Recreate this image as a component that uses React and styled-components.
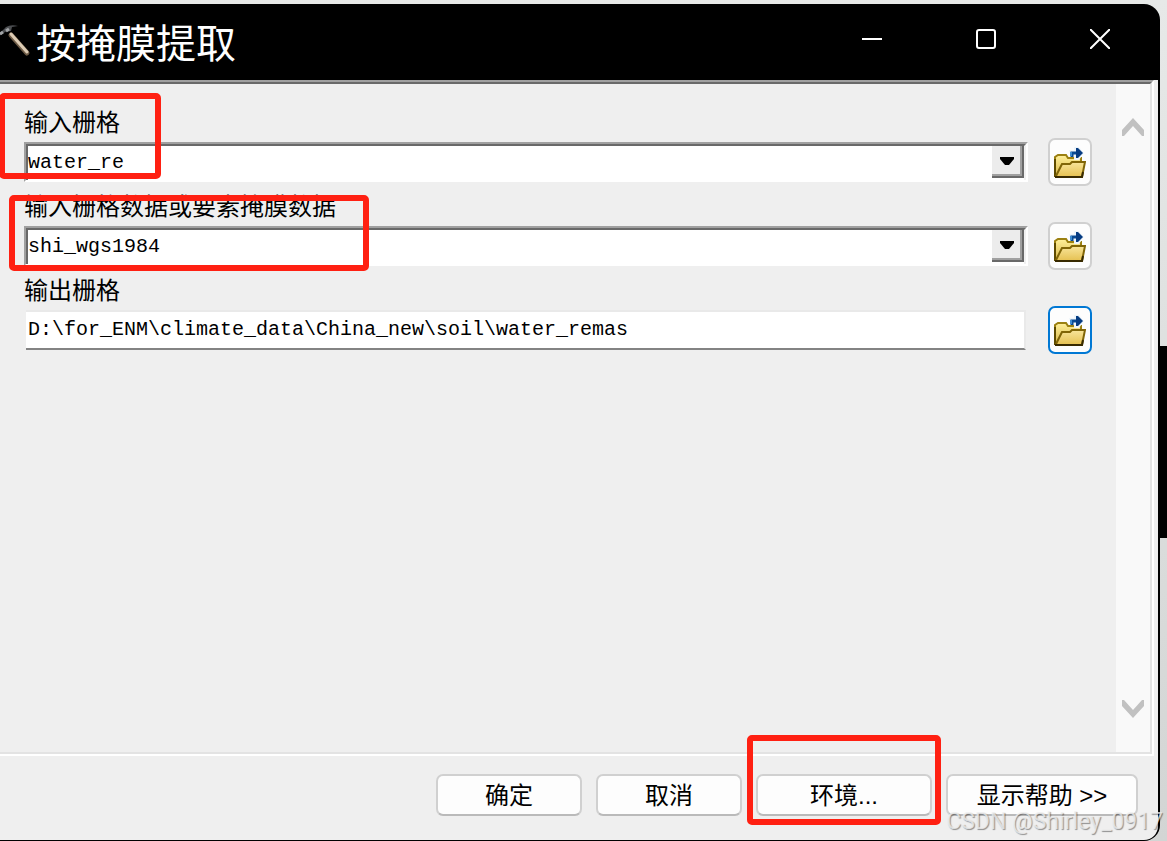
import React, { useState } from 'react';
import styled, { createGlobalStyle } from 'styled-components';

const GlobalStyle = createGlobalStyle`
  * {
    box-sizing: border-box;
  }
  body {
    margin: 0;
    overflow: hidden;
    color: #000;
    font-family: "Liberation Sans", "Noto Sans CJK SC", sans-serif;
  }
  button, input, select {
    font: inherit;
    color: inherit;
  }
`

const Desktop = styled.div`
  position: relative;
  display: flex;
  min-height: 100vh;
  padding: 4px 7px 0 0;
  background: linear-gradient(#e7e9e8, #d3d5d4);
`

// part of another window that shows behind the dialog
const BackWindow = styled.div`
  position: absolute;
  right: 0;
  top: 346px;
  width: 24px;
  height: 192px;
  background: #000;
`

const Dialog = styled.main`
  position: relative;
  flex: 1;
  display: flex;
  flex-direction: column;
  background: #000;
  border-radius: 0 16px 16px 0;
`

const TitleBar = styled.header`
  display: flex;
  align-items: center;
  height: 76px;
  padding-right: 3px;
  color: #fff;
`

const Title = styled.h1`
  flex: 1;
  margin: 0 0 0 4px;
  padding-top: 4px;
  font-size: 40px;
  font-weight: 400;
  line-height: 60px;
`

const WindowButton = styled.button`
  align-self: flex-start;
  display: flex;
  align-items: center;
  justify-content: center;
  width: 114px;
  height: 70px;
  padding: 0;
  border: 0;
  background: none;
  color: #fff;
`

const Client = styled.div`
  flex: 1;
  display: flex;
  flex-direction: column;
  margin: 0 2px 1px 0;
  background: #efefef;
  border-radius: 0 0 14px 0;
`

const Panel = styled.div`
  flex: 1;
  display: flex;
  margin-right: 4px;
  border: solid #fff;
  border-width: 2px 2px 2px 0;
  border-top-color: #a0a0a0;
`

const PanelInner = styled.div`
  flex: 1;
  display: flex;
  border: solid #e3e3e3;
  border-width: 2px 2px 2px 0;
  border-top-color: #696969;
`

const Form = styled.div`
  flex: 1;
  padding: 18px 24px;
`

const Field = styled.div`
  position: relative;
  display: grid;
  grid-template-columns: 1fr 44px;
  grid-template-rows: 36px 48px;
  column-gap: 20px;
  align-items: center;
`

const Label = styled.label`
  grid-column: 1 / -1;
  padding-top: 6px;
  font-size: 24px;
  line-height: 32px;
`

const Combo = styled.div`
  display: flex;
  height: 40px;
  border: 2px solid #fff;
  border-top-color: #a0a0a0;
  border-left-color: #a0a0a0;
`

const ComboInner = styled.div`
  flex: 1;
  display: grid;
  grid-template-columns: 1fr 32px;
  border: solid #696969;
  border-width: 2px 0 0 2px;
  border-right: 2px solid #f0f0f0;
  background: #fff;
`

const Select = styled.select`
  grid-area: 1 / 1 / 2 / 3;
  appearance: none;
  min-width: 0;
  padding: 0;
  border: 0;
  border-radius: 0;
  outline: none;
  background: #fff;
  font-family: "Liberation Mono", monospace;
  font-size: 20px;
  line-height: 28px;
`

const ComboArrow = styled.span`
  grid-area: 1 / 2 / 2 / 3;
  display: flex;
  align-items: center;
  justify-content: center;
  height: 32px;
  border: solid #696969;
  border-width: 0 2px 2px 0;
  background: #ececec;
  box-shadow: inset -2px -2px #a0a0a0;
  pointer-events: none;
`

const TextInput = styled.input`
  min-width: 0;
  height: 40px;
  margin: 0 2px;
  padding: 0 0 2px 2px;
  border: 2px solid #e9e9e9;
  border-left-width: 0;
  border-bottom-color: #838383;
  outline: none;
  background: #fff;
  font-family: "Liberation Mono", monospace;
  font-size: 20px;
`

const BrowseButton = styled.button`
  display: flex;
  align-items: center;
  justify-content: center;
  height: 48px;
  padding: 0;
  border: 2px solid ${props => (props.$active ? '#0078d4' : '#d0d0d0')};
  border-radius: 7px;
  background: #fdfdfd;
`

const ScrollBar = styled.div`
  display: flex;
  flex-direction: column;
  justify-content: space-between;
  width: 34px;
  padding: 32px 0;
  background: #f9f9f9;
`

const ScrollButton = styled.button`
  display: flex;
  justify-content: center;
  padding: 0;
  border: 0;
  background: none;
`

const Footer = styled.footer`
  display: flex;
  justify-content: flex-end;
  gap: 14px;
  padding: 18px 20px 24px;
`

const ButtonSlot = styled.div`
  position: relative;
  display: flex;
`

const Button = styled.button`
  width: ${props => props.$width || 146}px;
  height: 42px;
  padding: 2px 0 0;
  border: 2px solid #d0d0d0;
  border-bottom-color: #bababa;
  border-radius: 7px;
  background: #fdfdfd;
  font-size: 24px;
  line-height: 36px;
  white-space: pre;
`

// red frames drawn over the parts to fill in
const Mark = styled.div`
  position: absolute;
  z-index: 1;
  border: 6px solid #ff2012;
  border-radius: 5px;
  pointer-events: none;
`

const RasterMark = styled(Mark)`
  top: -9px;
  left: -25px;
  width: 162px;
  height: 86px;
`

const MaskMark = styled(Mark)`
  top: 9px;
  left: -15px;
  width: 360px;
  height: 76px;
`

const ButtonMark = styled(Mark)`
  inset: -39px -9px -9px;
`

const Watermark = styled.div`
  position: absolute;
  right: 4px;
  bottom: 5px;
  z-index: 2;
  color: rgba(240, 240, 240, 0.8);
  font-family: Roboto, sans-serif;
  font-size: 23px;
  line-height: 28px;
  text-shadow: 1px 1px 1px rgba(0, 0, 0, 0.4);
  pointer-events: none;
`

function HammerIcon() {
  return (
    <svg width="32" height="36" viewBox="0 0 32 36" aria-hidden="true">
      <path d="M11 11 27 29" stroke="#6d5a45" strokeWidth="5" strokeLinecap="round" />
      <path d="M11 10 27 28" stroke="#dccbb4" strokeWidth="3" strokeLinecap="round" />
      <path d="M0 9 6 3Q11 0 18 2L12 3 11 7 5 8 1 11H0Z" fill="#4c4e51" />
      <path d="M0 10 3 8M6 7 9 5" stroke="#a0a3a6" strokeWidth="3" />
    </svg>
  )
}

function FolderIcon() {
  return (
    <svg width="32" height="32" viewBox="0 0 32 32" aria-hidden="true">
      <defs>
        <linearGradient id="folderBack" x2="0" y2="1">
          <stop stopColor="#fff09a" />
          <stop offset="1" stopColor="#d9b84a" />
        </linearGradient>
        <linearGradient id="folderFront" x2="0" y2="1">
          <stop stopColor="#f8e59b" />
          <stop offset="1" stopColor="#e5c050" />
        </linearGradient>
      </defs>
      <path d="M1 30V11L4 9H12L14 12H27V18" fill="url(#folderBack)" stroke="#9b8011" strokeWidth="2" />
      <path d="M1 31V13" stroke="#5d4a00" strokeWidth="2" />
      <path d="M2 30 8 18H16L18 16H31L28 31H2Z" fill="url(#folderFront)" stroke="#806507" strokeWidth="2" />
      <path d="M1 31H28L29 26" fill="none" stroke="#382a00" strokeWidth="2" />
      <path d="M15 4H20V1H25L30 7 25 14H20V11H17Z" fill="#eef5fb" />
      <path d="M18 11V7H27" fill="none" stroke="#084a94" strokeWidth="3" />
      <path d="M22 2H24L29 7 24 12H22Z" fill="#063c82" />
      <path d="M16 6H18V10H16Z" fill="#3b8bd0" />
    </svg>
  )
}

function ComboField({ id, label, value, children }) {
  return (
    <Field>
      <Label htmlFor={id}>{label}</Label>
      <Combo>
        <ComboInner>
          <Select id={id} defaultValue={value}>
            <option>{value}</option>
          </Select>
          <ComboArrow>
            <svg width="14" height="8" viewBox="0 0 14 8" aria-hidden="true">
              <path d="M0 0H14V2L9 8H5L0 2Z" />
            </svg>
          </ComboArrow>
        </ComboInner>
      </Combo>
      <BrowseButton type="button" aria-label={`浏览${label}`}>
        <FolderIcon />
      </BrowseButton>
      {children}
    </Field>
  )
}

function App() {
  const [output, setOutput] = useState('D:\\for_ENM\\climate_data\\China_new\\soil\\water_remas');
  const onChange = e => setOutput(e.target.value);

  return (
    <>
      <GlobalStyle />
      <Desktop>
        <BackWindow />
        <Dialog>
          <TitleBar>
            <HammerIcon />
            <Title>按掩膜提取</Title>
            <WindowButton type="button" aria-label="最小化">
              <svg width="20" height="20"><path d="M0 10H20" stroke="#fff" strokeWidth="2" /></svg>
            </WindowButton>
            <WindowButton type="button" aria-label="最大化">
              <svg width="20" height="20">
                <rect x="1" y="1" width="18" height="18" rx="2" fill="none" stroke="#fff" strokeWidth="2" />
              </svg>
            </WindowButton>
            <WindowButton type="button" aria-label="关闭">
              <svg width="20" height="20"><path d="M0 0 20 20M20 0 0 20" stroke="#fff" strokeWidth="2" /></svg>
            </WindowButton>
          </TitleBar>
          <Client>
            <Panel>
              <PanelInner>
                <Form>
                  <ComboField id="raster" label="输入栅格" value="water_re">
                    <RasterMark />
                  </ComboField>
                  <ComboField id="mask" label="输入栅格数据或要素掩膜数据" value="shi_wgs1984">
                    <MaskMark />
                  </ComboField>
                  <Field>
                    <Label htmlFor="output">输出栅格</Label>
                    <TextInput id="output" value={output} onChange={onChange} />
                    <BrowseButton type="button" aria-label="浏览输出栅格" $active>
                      <FolderIcon />
                    </BrowseButton>
                  </Field>
                </Form>
                <ScrollBar>
                  <ScrollButton type="button" aria-label="向上滚动">
                    <svg width="24" height="22" viewBox="0 0 24 22">
                      <path d="M1 14 12 2 23 14V20H21L12 10 3 20H1Z" fill="#c1c1c1" />
                    </svg>
                  </ScrollButton>
                  <ScrollButton type="button" aria-label="向下滚动">
                    <svg width="24" height="22" viewBox="0 0 24 22">
                      <path d="M1 8V2H3L12 12 21 2H23V8L12 20Z" fill="#c1c1c1" />
                    </svg>
                  </ScrollButton>
                </ScrollBar>
              </PanelInner>
            </Panel>
            <Footer>
              <Button type="button">确定</Button>
              <Button type="button">取消</Button>
              <ButtonSlot>
                <Button type="button" $width={176}>环境...</Button>
                <ButtonMark />
              </ButtonSlot>
              <Button type="button" $width={192}>{'显示帮助 >>'}</Button>
            </Footer>
          </Client>
        </Dialog>
        <Watermark>CSDN @Shirley_0917</Watermark>
      </Desktop>
    </>
  )
}

export default App;
